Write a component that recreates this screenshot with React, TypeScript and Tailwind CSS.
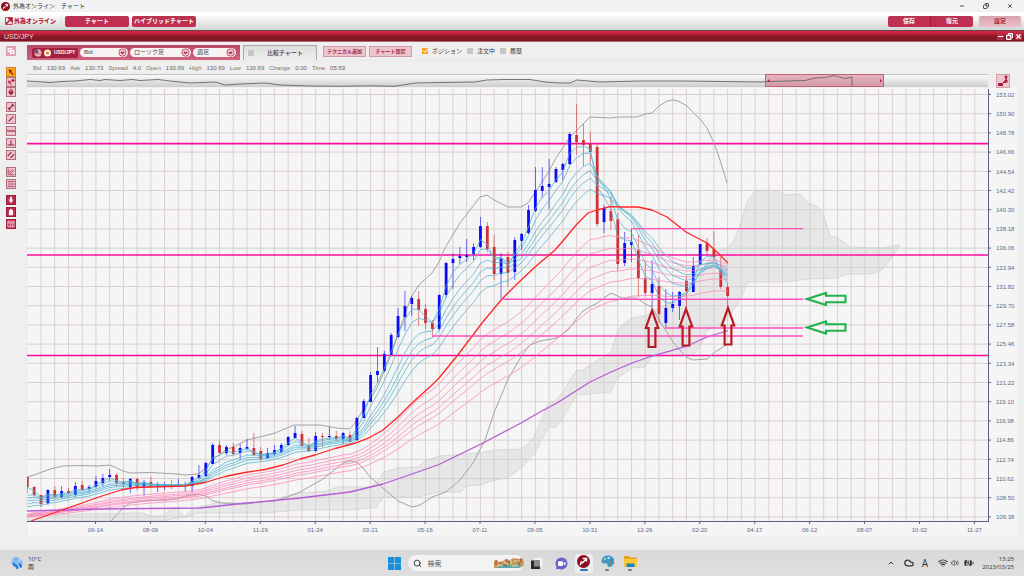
import type { ReactNode } from "react";
import { ChevronUp, Cloud, Wifi, Volume2, BatteryCharging, Search, Minus, Copy, X } from "lucide-react";

type Candle = [up: 0 | 1, high: number, top: number, bottom: number, low: number];

const candles: Candle[] = [
  [0, 477, 477, 487, 493], [0, 486, 487, 495, 497], [0, 495, 495, 504, 507], [1, 489, 490, 503, 505],
  [0, 486, 490, 497, 499], [1, 486, 491, 497, 499], [0, 488, 491, 493, 495], [1, 482, 486, 495, 497],
  [0, 481, 485, 490, 490], [1, 485, 487, 489, 492], [1, 476, 481, 487, 488], [1, 474, 478, 483, 487],
  [1, 469, 475, 477, 481], [0, 473, 475, 483, 487], [0, 478, 482, 484, 488], [1, 478, 479, 487, 493],
  [0, 478, 479, 487, 490], [1, 480, 482, 487, 496], [0, 477, 482, 487, 488], [1, 482, 485, 487, 492],
  [1, 482, 485, 487, 490], [0, 480, 485, 486, 489], [1, 479, 485, 486, 487], [1, 482, 485, 486, 492],
  [1, 476, 477, 486, 492], [1, 465, 475, 478, 479], [1, 462, 463, 476, 477], [1, 443, 445, 464, 464],
  [0, 441, 445, 453, 453], [1, 445, 447, 453, 455], [0, 443, 447, 454, 455], [1, 444, 448, 453, 460],
  [1, 439, 447, 449, 450], [0, 433, 448, 455, 456], [0, 447, 451, 459, 461], [1, 448, 453, 458, 459],
  [1, 445, 450, 454, 456], [1, 443, 445, 452, 453], [1, 436, 437, 445, 446], [1, 426, 433, 438, 439],
  [0, 431, 434, 446, 447], [0, 438, 445, 451, 451], [1, 432, 436, 451, 452], [0, 433, 436, 437, 447],
  [1, 427, 436, 437, 440], [0, 431, 436, 439, 441], [1, 432, 433, 439, 444], [0, 431, 435, 442, 442],
  [1, 417, 418, 440, 441], [1, 399, 401, 418, 418], [1, 372, 375, 402, 402], [1, 347, 371, 375, 382],
  [1, 351, 354, 371, 372], [1, 333, 335, 355, 355], [1, 308, 316, 337, 338], [1, 291, 306, 317, 331],
  [1, 296, 298, 304, 316], [0, 291, 299, 310, 326], [0, 304, 309, 323, 329], [0, 320, 323, 329, 337],
  [1, 294, 295, 329, 331], [1, 262, 263, 295, 298], [1, 253, 259, 263, 289], [1, 247, 256, 258, 264],
  [1, 239, 255, 257, 262], [1, 243, 247, 254, 260], [1, 217, 226, 247, 248], [0, 222, 226, 249, 252],
  [0, 235, 247, 274, 280], [1, 253, 258, 274, 299], [0, 252, 257, 273, 287], [1, 237, 240, 272, 280],
  [1, 233, 234, 241, 250], [1, 205, 210, 233, 234], [1, 167, 190, 211, 212], [1, 167, 186, 191, 198],
  [1, 159, 184, 187, 209], [1, 167, 169, 182, 183], [1, 163, 164, 170, 180], [1, 132, 134, 164, 165],
  [0, 104, 135, 142, 155], [0, 124, 140, 145, 166], [0, 132, 144, 152, 162], [0, 144, 147, 224, 227],
  [1, 205, 208, 222, 233], [0, 196, 211, 221, 230], [0, 213, 219, 264, 271], [1, 232, 243, 263, 266],
  [1, 228, 242, 245, 262], [0, 235, 250, 278, 297], [0, 262, 278, 293, 296], [1, 260, 284, 293, 307],
  [0, 277, 286, 314, 323], [1, 289, 308, 323, 328], [1, 292, 304, 308, 312], [1, 291, 292, 306, 320],
  [0, 277, 281, 291, 310], [1, 257, 266, 292, 292], [1, 244, 244, 265, 265], [0, 238, 243, 251, 255],
  [0, 231, 249, 257, 260], [0, 257, 270, 287, 289], [0, 283, 287, 296, 307],
];

const STEP = 6.866;
const candleX = (i: number) => 27.3 + i * STEP;

function ema(period: number, seed: number) {
  const k = 2 / (period + 1);
  let value = seed;
  return candles
    .map(([up, , top, bottom], i) => {
      const close = up ? top : bottom;
      value = i === 0 ? seed : value + k * (close - value);
      return `${candleX(i).toFixed(1)},${value.toFixed(1)}`;
    })
    .join(" ");
}

const shortAverages = [[3, 487], [5, 495], [8, 498], [10, 501], [12, 504], [15, 507]].map(([p, s]) => ema(p, s));
const longAverages = [[30, 514], [35, 515], [40, 515], [45, 516], [50, 516], [60, 517]].map(([p, s]) => ema(p, s));

const middle =
  "31,521 48,515 62,510 82,503 102,496 121,490 135,487.5 150,487 185,486 205,482.5 225,476.5 245,472.5 265,469.5 283,465 300,459 315,455 335,448.5 350,444.5 357,442.7 370,437.3 383,430 398,417 412,403 432,385 439,378 457,356 473,335 482,323 502,299 517,284 535,267 555,250 562,242 577,224 588,213 597,210 610,206.7 620,207 638,207 652,210 667,217 686,232 707,243 718,253 728,263";
const slow =
  "27,511 100,509 200,508 247,503 300,498 350,492 383,484 412,474 439,464.5 485,442 521,423 540,412 557,403 590,382 611,372 632,363 652,356 687,346 707,337 728,330.5";
const upperBand =
  "27,477 37,474 50,469 63,466 80,465.5 97,466 110,465 123,471 130,473 150,472.5 177,474 185,475 198,474 205,469 213,459 226,450 235,446 247,440 260,437 275,433 287,428 294,425 320,425 337,428 350,429 357,420 363,410 377,388 391,355 397,337 404,317 411,297 419,285 432,273 439,262 445,248 460,223 480,197 487,195 494,200 502,204 508,207 521,207 528,203 542,182 549,171 556,158 570,137 583,124 590,117 610,118 620,117 637,117 645,114 652,113 659,106 667,101 673,100 678,101 687,106 700,119 707,128 714,143 720,160 727,183";
const lowerBand =
  "111,521 123,508 130,503 143,501 167,500 177,499 185,496 198,494 206,496 213,501 223,503 247,504 260,502 275,501 287,497 300,492 323,479 343,463 350,461 357,462 363,468 370,477 383,488 398,501 412,507 420,505 432,497 446,492 460,480 473,463 485,440 494,413 508,379 522,355 530,345 540,341 557,338 568,330 577,318 583,311 597,303 611,293 622,298 637,298 645,304 652,307 659,320 673,342 686,357 693,360 707,359 715,352 728,344";
const cloud =
  "27,515 143,513 150,516 163,516 172,509 178,509 184,517 192,510 198,507 217,503 247,503 273,501 282,497 300,493 327,491 337,487 370,487 377,482 384,472 398,468 418,467 425,461 439,456 480,453 495,450 521,449 528,444 534,437 541,421 548,404 555,401 563,392 570,380 576,371 583,370 590,365 603,357 611,352 617,333 623,324 632,318 645,316 653,312 680,297 700,277 710,257 720,250 727,248 733,242 740,225 748,200 755,192 762,190 778,191 785,195 800,194 808,203 818,207 824,216 830,236 838,238 850,247 880,248 900,245 893,256 882,270 872,274 847,274 837,278 808,279 783,282 748,282 740,300 728,318 720,325 707,330 700,347 693,355 652,356 645,367 632,368 617,378 611,392 590,394 577,395 570,406 563,418 556,427 549,427 541,441 535,453 522,467 508,478 495,480 480,485 467,486 460,492 439,492 418,497 383,497 377,507 370,508 350,510 300,510 275,512 267,513 197,513 187,517 178,518 163,521 27,521";

const priceLabels = Array.from({ length: 23 }, (_, i) => (153.02 - i * 2.12).toFixed(2));
const dateLabels = ["06-14", "08-09", "10-04", "11-29", "01-24", "03-21", "05-16", "07-11", "09-05", "10-31", "12-26", "02-20", "04-17", "06-12", "08-07", "10-02", "11-27"];

const quotes = [
  ["Bid", "130.69"], ["Ask", "130.73"], ["Spread", "4.0"], ["Open", "130.69"],
  ["High", "130.69"], ["Low", "130.69"], ["Change", "0.00"], ["Time", "05:59"],
];

function PriceChart() {
  return (
    <svg viewBox="27 88 997 448" className="block w-full" role="img" aria-label="USD/JPY">
      <rect x="27" y="88" width="991" height="448" fill="#f5f5f5" />
      <g stroke="#dccfcf" strokeWidth="1">
        {Array.from({ length: 69 }, (_, i) => (
          <line key={i} x1={41 + i * 13.732} x2={41 + i * 13.732} y1="89" y2="521" />
        ))}
        {priceLabels.map((p, i) => (
          <line key={p} x1="27" x2="988" y1={94.5 + i * 19.2} y2={94.5 + i * 19.2} />
        ))}
      </g>
      <polygon points={cloud} fill="#cfcfcf" fillOpacity="0.36" stroke="#cfcfcf" strokeWidth="0.7" />
      <g stroke="#ff0a9d" strokeWidth="1.6">
        <line x1="27" x2="988" y1="143.6" y2="143.6" />
        <line x1="27" x2="988" y1="255" y2="255" />
        <line x1="27" x2="988" y1="355.5" y2="355.5" />
      </g>
      <g fill="none" strokeLinejoin="round">
        <polyline points={upperBand} stroke="#a3a3a3" strokeWidth="1" />
        <polyline points={lowerBand} stroke="#a3a3a3" strokeWidth="1" />
      </g>
      {candles.map(([up, high, top, bottom, low], i) => (
        <g key={i} fill={up ? "#0a0af5" : "#cc3338"}>
          <rect x={candleX(i) - 0.45} y={high} width="0.9" height={low - high} opacity="0.65" />
          <rect x={candleX(i) - 1.4} y={top} width="2.8" height={Math.max(bottom - top, 1)} />
        </g>
      ))}
      <g fill="none" strokeLinejoin="round">
        {longAverages.map((points) => (
          <polyline key={points} points={points} stroke="#ff86bb" strokeWidth="0.9" strokeOpacity="0.85" />
        ))}
        {shortAverages.map((points) => (
          <polyline key={points} points={points} stroke="#4fb4d2" strokeWidth="0.9" strokeOpacity="0.85" />
        ))}
        <polyline points={slow} stroke="#b45bd6" strokeWidth="1.3" />
        <polyline points={middle} stroke="#ff2424" strokeWidth="1.3" />
      </g>
      <g stroke="#ff4fbd" strokeWidth="1.4">
        <line x1="631" x2="803" y1="228.6" y2="228.6" />
        <line x1="501" x2="803" y1="299.3" y2="299.3" />
        <line x1="665" x2="803" y1="328" y2="328" />
        <line x1="432" x2="803" y1="336" y2="336" />
      </g>
      <g fill="none" stroke="#b81a22" strokeWidth="2.2">
        {[[652, 310.5], [686, 309], [728, 308]].map(([x, y]) => (
          <path key={x} d={`M${x} ${y}l6.2 17.5h-2.8v19h-6.8v-19h-2.800z`} />
        ))}
      </g>
      <g fill="none" stroke="#22b14c" strokeWidth="2.1">
        {[299, 327.5].map((y) => (
          <path key={y} d={`M807 ${y}l19 -6v2.800h19.500v6.400h-19.500v2.800z`} />
        ))}
      </g>
      <g stroke="#5a6080" strokeWidth="1">
        <line x1="27" x2="989" y1="521.5" y2="521.5" />
        <line x1="988.5" x2="988.5" y1="89" y2="522" />
        {priceLabels.map((p, i) => (
          <line key={p} x1="988" x2="991" y1={94.5 + i * 19.2} y2={94.5 + i * 19.2} />
        ))}
        {dateLabels.map((d, i) => (
          <line key={d} x1={95.5 + i * 54.93} x2={95.5 + i * 54.93} y1="521" y2="524" />
        ))}
      </g>
      <g fill="#62678a" fontSize="6">
        {priceLabels.map((p, i) => (
          <text key={p} x="996" y={96.7 + i * 19.2}>{p}</text>
        ))}
        {dateLabels.map((d, i) => (
          <text key={d} x={95.5 + i * 54.93} y="532" textAnchor="middle">{d}</text>
        ))}
      </g>
    </svg>
  );
}

function Overview() {
  return (
    <div className="min-w-0 flex-1">
      <svg viewBox="27 73 961 13" preserveAspectRatio="none" className="block h-[13px] w-full bg-linear-to-b from-white to-[#cdcdcd] shadow-[inset_0_1px_0_#c4c4c4]" aria-hidden="true">
        <rect x="765.5" y="73.5" width="118" height="12" fill="#d46a80" fillOpacity="0.5" stroke="#c4607a" />
        <polyline
          fill="none"
          stroke="#666"
          strokeWidth="0.9"
          points="27,80 50,81.5 62,80.5 75,80 90,78.5 100,79.5 105,78.5 120,79.5 132,78.5 140,79.5 158,78.5 170,80 190,82 215,81 225,84 240,83 265,82 280,84 310,85 340,85.3 370,84.8 395,85.3 415,82 440,81.5 475,81 487,79 505,78.5 530,78.5 545,81 560,82 570,82 577,79 600,81 640,80 680,80 720,80.5 760,81 770,80.5 805,79.5 815,77 825,76.5 834,74.5 845,77.5 852,76 852,86"
        />
        <path d="M769.5 78l-2 1.7 2 1.7zM880 78l2 1.7-2 1.7z" fill="#a81c3c" />
      </svg>
    </div>
  );
}

const railBase = "flex size-[10px] items-center justify-center border";
const railLight = "border-[#b06d7e] bg-[#ecc3cd] text-[#9c1c38]";
const railDark = "border-[#9c1c3c] bg-[#c02a4e] text-white";

function RailButton({ label, tone = railLight, children }: { label: string; tone?: string; children: ReactNode }) {
  return (
    <button type="button" aria-label={label} className={`${railBase} ${tone}`}>
      <svg viewBox="0 0 10 10" className="size-2" fill="none" stroke="currentColor" strokeWidth="1.4" aria-hidden="true">
        {children}
      </svg>
    </button>
  );
}

function ToolRail() {
  return (
    <nav aria-label="ツール" className="flex w-[27px] shrink-0 flex-col items-center border-r border-[#e9e9e9] pr-[5px] pt-1">
      <RailButton label="複製" tone="border-[#dba0ae] bg-[#e3a5b3] text-white">
        <path d="M1.5 2h4v3.5h-4zM4.5 4.5h4V8h-4z" />
      </RailButton>
      <div className="mt-[11px] flex flex-col">
        <RailButton label="選択" tone="border-[#c98a2a] bg-[#ffa317] text-[#8a1c28]">
          <path d="M2 1.5l5 2-1.7 1 3 3.5L7 9 4.300 5.300l-1 1.700z" fill="currentColor" stroke="none" />
        </RailButton>
        <RailButton label="複数選択">
          <path d="M1.5 3l4 1.5L4 5.500l2 3-1 .5-2-3-1 1.500z" fill="currentColor" stroke="none" />
          <path d="M7.5 1v4M5.5 3h4" />
        </RailButton>
        <RailButton label="移動">
          <path d="M5 1v5M3 3v2M7 3v2" />
          <path d="M1.5 5h7L5 9.5z" fill="currentColor" stroke="none" />
        </RailButton>
      </div>
      <div className="mt-[5px] flex flex-col gap-0.5">
        <RailButton label="線分">
          <path d="M2 8l6-6M1 6.5h2.5V9M6.5 1v2.5H9" />
        </RailButton>
        <RailButton label="直線"><path d="M2 8l6-6" /></RailButton>
        <RailButton label="水平線"><path d="M0 5h10" /></RailButton>
        <RailButton label="垂直線"><path d="M5 1.5v6M1 7.5h8" /></RailButton>
        <RailButton label="平行線"><path d="M1 6l4.500-4.500M4.500 8.500L9 4" /></RailButton>
      </div>
      <div className="mt-[7px] flex flex-col gap-0.5">
        <RailButton label="フィボナッチ">
          <path d="M1.5 1v8M3 8.500l5.500-6M3 8.500h6M3 6l3-4" strokeWidth="0.9" />
        </RailButton>
        <RailButton label="リトレースメント"><path d="M1 2h8M1 5h8M1 8h8" strokeWidth="0.9" /></RailButton>
      </div>
      <div className="mt-[6px] flex flex-col gap-0.5">
        <RailButton label="下げる" tone={railDark}>
          <path d="M3.800 1h2.400v3.500h2L5 9 1.800 4.500h2z" fill="currentColor" stroke="none" />
        </RailButton>
        <RailButton label="削除" tone={railDark}>
          <path d="M5 1l2.500 2v3l1 1h-1v2h-5V7h-1l1-1V3z" fill="currentColor" stroke="none" />
        </RailButton>
        <RailButton label="一覧" tone={railDark}><path d="M1 1.500h8v7H1zM1 3.500h8M4 3.500v5M6.500 3.500v5" strokeWidth="0.8" /></RailButton>
      </div>
    </nav>
  );
}

function PillSelect({ label, value, width }: { label: string; value: string; width: string }) {
  return (
    <div className={`relative ${width}`}>
      <select aria-label={label} defaultValue={value} className="block h-[9px] w-full appearance-none rounded-full bg-[#f7f3f4] pl-1 text-[6px] leading-[9px] text-[#444]">
        <option>{value}</option>
      </select>
      <svg viewBox="0 0 9 9" className="pointer-events-none absolute right-px top-0 size-[9px]" fill="none" stroke="#c25a72" aria-hidden="true">
        <circle cx="4.5" cy="4.5" r="3.7" fill="#f0c6cf" />
        <path d="M2.8 3.8l1.7 1.7 1.7-1.7" strokeWidth="1.2" stroke="#98203c" />
      </svg>
    </div>
  );
}

function Check({ label, checked = false }: { label: string; checked?: boolean }) {
  return (
    <label className="flex items-center gap-1">
      <span className="relative flex">
        <input type="checkbox" defaultChecked={checked} className="size-1.5 appearance-none bg-[#c6c6c6] checked:bg-[#ffa01e]" />
        {checked && (
          <svg viewBox="0 0 6 6" className="pointer-events-none absolute inset-0 size-1.5" fill="none" stroke="#fff" aria-hidden="true">
            <path d="M1 2.5l2 2L5.500 1" />
          </svg>
        )}
      </span>
      {label}
    </label>
  );
}

const softButton = "mt-px h-[11px] w-[43px] whitespace-nowrap border border-[#cf9ba6] bg-[#eec5cd] text-[5px] font-bold text-[#a01c3a]";

function ChartToolbar() {
  return (
    <div className="flex h-[18px] items-start pt-[3px] text-[6px] leading-none text-[#444]">
      <div className="flex h-[15px] w-[213px] items-center gap-0.5 bg-linear-to-b from-[#b84563] to-[#cf6480] pl-[5px] pr-[3px]">
        <button type="button" className="flex h-[10px] w-[46px] items-center gap-0.5 rounded-xs bg-[#a3203f] pl-0.5 text-[5px] font-bold text-white">
          <svg viewBox="0 0 18 8" className="h-2 w-[18px] shrink-0" aria-hidden="true">
            <circle cx="4" cy="4" r="3.500" fill="#f5e9e9" />
            <path d="M1 2.700h6.200M.6 4.300h6.800M1 5.900h6" stroke="#cf4450" strokeWidth=".8" />
            <path d="M.5 4A3.500 3.500 0 0 1 4 .5V4z" fill="#5b5388" />
            <circle cx="13.500" cy="4" r="3.500" fill="#fff2e4" />
            <circle cx="13.500" cy="4" r="1.500" fill="#ef7a28" />
          </svg>
          USD/JPY
        </button>
        <PillSelect label="レート種別" value="Bid" width="w-12" />
        <PillSelect label="チャート種別" value="ローソク足" width="w-[61px]" />
        <PillSelect label="足種" value="週足" width="w-[43px]" />
      </div>
      <button type="button" className="ml-[3px] flex h-[15px] w-[74px] items-center gap-[13px] border border-b-0 border-[#aaa] bg-linear-to-b from-[#dcdcdc] to-[#f0f0f0] pl-1 font-medium">
        <span className="size-1.5 bg-[#c6c6c6]" />
        比較チャート
      </button>
      <button type="button" className={`${softButton} ml-1.5`}>テクニカル追加</button>
      <button type="button" className={`${softButton} ml-[3px]`}>チャート設定</button>
      <div className="ml-2.5 mt-[3px] flex items-center gap-[5px] whitespace-nowrap">
        <Check label="ポジション" checked />
        <Check label="注文中" />
        <Check label="履歴" />
      </div>
    </div>
  );
}

function Mark({ className }: { className: string }) {
  return (
    <svg viewBox="0 0 12 12" className={className} aria-hidden="true">
      <circle cx="6" cy="6" r="6" fill="#8c0f20" />
      <path d="M3 9.300l1-2.800 1.300.6L8.500 3.500M5.300 3.200h3.500v3" fill="none" stroke="#fff" strokeWidth="1.300" />
    </svg>
  );
}

const redButton = "h-[11px] rounded-xs bg-linear-to-b from-[#b93353] to-[#c52a50] text-[6px] font-bold leading-none text-white";

function AppHeader() {
  return (
    <header>
      <div className="flex h-3 items-center bg-[#f2f2f2] pl-px pr-[11px] text-[6px] leading-none text-[#333]">
        <Mark className="size-[9px]" />
        <h1 className="ml-[3px] whitespace-pre">外為オンライン　チャート</h1>
        <div className="ml-auto flex gap-[18px] text-[#222]">
          <button type="button" aria-label="最小化"><Minus className="size-1.5" strokeWidth={3} /></button>
          <button type="button" aria-label="元に戻す"><Copy className="size-1.5 -scale-x-100" strokeWidth={3} /></button>
          <button type="button" aria-label="閉じる"><X className="size-1.5" strokeWidth={3} /></button>
        </div>
      </div>
      <div className="flex h-[18px] items-center bg-linear-to-b from-white from-10% to-[#d4d4d4] pl-[5px] pr-[3px]">
        <div className="flex w-[57px] items-center gap-px whitespace-nowrap border-r border-[#ddd] text-[6px] font-black leading-none text-[#b8183c]">
          <svg viewBox="0 0 8 8" className="size-2" aria-hidden="true">
            <path d="M.5.5h7v7h-7z" fill="none" stroke="#c54a64" />
            <path d="M1 7l5-5M3 1.500h3.500V5" stroke="#b8183c" strokeWidth="1.600" fill="none" />
          </svg>
          外為オンライン
        </div>
        <button type="button" className={`${redButton} ml-[3px] w-16`}>チャート</button>
        <button type="button" className={`${redButton} ml-[3px] w-16 whitespace-nowrap`}>ハイブリッドチャート</button>
        <div className="ml-auto flex">
          <button type="button" className={`${redButton} w-[43px] rounded-r-none border-r border-[#9e1c3c]`}>保存</button>
          <button type="button" className={`${redButton} w-[42px] rounded-l-none`}>復元</button>
          <button type="button" className="ml-[6px] h-[11px] w-[42px] rounded-xs bg-linear-to-b from-[#d9a5ae] to-[#e8c0c7] text-[6px] font-bold leading-none text-[#a32440]">設定</button>
        </div>
      </div>
      <div className="flex h-3 items-center border-y border-t-[#5f4a4f] border-b-[#b06a74] bg-linear-to-b from-[#ce2341] from-20% via-[#8e1b2b] via-50% to-[#7d1624] pl-1 pr-[2px] text-[7px] leading-none text-[#ecd9dc]">
        <h2>USD/JPY</h2>
        <div className="ml-auto flex gap-0.5 text-white">
          <button type="button" aria-label="最小化" className="bg-[#b52a48]"><Minus className="size-[7px]" strokeWidth={4} /></button>
          <button type="button" aria-label="元に戻す" className="bg-[#b52a48]"><Copy className="size-[7px] -scale-x-100" strokeWidth={4} /></button>
          <button type="button" aria-label="閉じる" className="bg-[#b52a48]"><X className="size-[7px]" strokeWidth={4} /></button>
        </div>
      </div>
    </header>
  );
}

function Taskbar() {
  return (
    <footer className="mt-auto grid h-[26px] grid-cols-[1fr_auto_1fr] items-center bg-linear-to-b from-[#d8d8d8] to-[#dfdfdf] font-['Open_Sans','Noto_Sans_CJK_JP',sans-serif] text-[6px] leading-[8px] text-[#333]">
      <div className="flex items-center gap-1 pl-[10px]">
        <svg viewBox="0 0 14 14" className="size-[14px]" aria-hidden="true">
          <circle cx="6" cy="4.5" r="3.5" fill="#7fb2ee" />
          <circle cx="10" cy="6" r="3" fill="#a9cdf5" />
          <rect x="1" y="4.5" width="12" height="4.5" rx="2.2" fill="#8fbdf2" />
          <path d="M4 8l.7 1.500M6.500 10l.8 1.800M10 8.500l.8 2" stroke="#1f78e8" strokeWidth="2.600" strokeLinecap="round" />
        </svg>
        <div>
          <div>10°C</div>
          <div>雨</div>
        </div>
      </div>
      <div className="flex items-center">
        <button type="button" aria-label="スタート">
          <svg viewBox="0 0 13 13" className="size-[13px]" aria-hidden="true">
            <path d="M0 0h6.200v6.200H0zM6.800 0H13v6.200H6.800zM0 6.800h6.200V13H0zM6.800 6.800H13V13H6.800z" fill="#1590dc" />
          </svg>
        </button>
        <label className="ml-[7px] flex h-4 w-[116px] items-center gap-1.5 overflow-hidden rounded-full bg-[#f3f3f3] pl-[5px]">
          <Search className="size-[9px] shrink-0" strokeWidth={2.5} />
          <input type="search" aria-label="検索" placeholder="検索" className="w-[60px] bg-transparent text-[7px] leading-none outline-none placeholder:text-[#555]" />
          <svg viewBox="0 0 30 12" className="ml-auto h-3 w-[30px] shrink-0" aria-hidden="true">
            <path d="M0 11V4l3-1 2 2 4-1 3-2 4 1 3-2 5 1 4-1 2 2v6l-5 2z" fill="#c79a5a" />
            <path d="M4 8h24l-3 3H3z" fill="#5fa7a8" />
            <path d="M2 3v5M6 5l2 3M12 2l1 4M22 2l2 4M27 1v5" stroke="#b5423d" />
            <path d="M10 5l4 2M17 3v4M20 4h5M3 9l6-1M18 9h6" stroke="#e9d9a0" />
            <path d="M9 8l4 1M15 4v3M25 5v3" stroke="#3d6a58" />
          </svg>
        </label>
        <button type="button" aria-label="タスク ビュー" className="ml-1.5">
          <svg viewBox="0 0 13 13" className="size-[13px]" aria-hidden="true">
            <path d="M4 1h8.500v8.500H4z" fill="#f4f4f4" />
            <path d="M1 3.500h9V12H1z" fill="#2a2a2a" />
            <path d="M4 3.500h6v6H4z" fill="#8c8c8c" />
          </svg>
        </button>
        <button type="button" aria-label="チャット" className="ml-3">
          <svg viewBox="0 0 13 13" className="size-[13px]" aria-hidden="true">
            <circle cx="6.5" cy="6.5" r="6" fill="#6761c8" />
            <path d="M1 12l1-4 3 4z" fill="#6761c8" />
            <rect x="3" y="4.2" width="5" height="4.8" rx="1" fill="#fff" />
            <path d="M8.5 6l2-1.300v3.800l-2-1.300z" fill="#fff" />
          </svg>
        </button>
        <button type="button" aria-label="外為オンライン" className="ml-[7px] flex h-[19px] w-[18px] flex-col items-center justify-center gap-px rounded-xs bg-[#eee]">
          <Mark className="size-[13px]" />
          <span className="h-0.5 w-2 rounded-full bg-[#2a78c8]" />
        </button>
        <button type="button" aria-label="ペイント" className="ml-2 flex flex-col items-center gap-px">
          <svg viewBox="0 0 13 13" className="size-[13px]" aria-hidden="true">
            <path d="M6 .5a6 5.500 0 1 1 2 11.500q-2 0-1.500-2t-2-1.500Q.5 9 .5 6 1 1 6 .5z" fill="#2c9ed8" />
            <circle cx="4" cy="4" r="1.1" fill="#f4d24c" />
            <circle cx="7.5" cy="3" r="1.1" fill="#f2f2f2" />
            <circle cx="3" cy="6.8" r="1" fill="#e8664a" />
            <path d="M10 3l1.200 5L10 12.500 9 8z" fill="#b87534" />
          </svg>
          <span className="h-0.5 w-1 rounded-full bg-[#777]" />
        </button>
        <button type="button" aria-label="エクスプローラー" className="ml-2.5 flex flex-col items-center gap-px">
          <svg viewBox="0 0 13 13" className="size-[13px]" aria-hidden="true">
            <path d="M0 1h5l1.500 1.500H13V5H0z" fill="#e5a21c" />
            <path d="M0 4h13v8H0z" fill="#fdc936" />
            <path d="M2.500 8.500h8V12h-8z" fill="#1c7fc4" />
          </svg>
          <span className="h-0.5 w-1 rounded-full bg-[#777]" />
        </button>
      </div>
      <div className="flex items-center justify-end pr-[10px]">
        <ChevronUp className="size-2" strokeWidth={3} />
        <Cloud className="ml-[9px] size-2.5" strokeWidth={3} />
        <span className="ml-2 text-[10px] leading-none">A</span>
        <Wifi className="ml-2.5 size-2.5" strokeWidth={2.5} />
        <Volume2 className="ml-[3px] size-2" />
        <BatteryCharging className="ml-[5px] size-2.5" fill="#333" />
        <div className="ml-2 text-right">
          <div>13:25</div>
          <div>2023/03/25</div>
        </div>
      </div>
    </footer>
  );
}

export default function App() {
  return (
    <div className="flex min-h-screen flex-col bg-[#efefef] font-['Liberation_Sans','Noto_Sans_CJK_JP',sans-serif]">
      <AppHeader />
      <main className="flex">
        <ToolRail />
        <div className="min-w-0 flex-1">
          <ChartToolbar />
          <div className="flex h-[14px] items-center gap-[5px] border-t border-[#e8e8e8] pl-1.5 text-[6px] leading-none text-[#666]">
            {quotes.map(([name, value]) => (
              <span key={name} className="flex gap-[5px]">
                <span className="text-[#857463]">{name}</span>
                <span>{value}</span>
              </span>
            ))}
          </div>
          <div className="flex pr-[14px]">
            <Overview />
            <button type="button" aria-label="縮尺" className="ml-2 flex size-[14px] items-center justify-center border border-[#d5a0ac] bg-[#ecc8d0]">
              <svg viewBox="0 0 12 12" className="size-3" aria-hidden="true">
                <path d="M1 8h5v3H1zM6 6.500h3V8H6zM7.500 5h3v2.500h-3zM9 0l2 2.500H7zM8.300 2h1.600v4H8.300z" fill="#b01c3c" />
              </svg>
            </button>
          </div>
          <PriceChart />
        </div>
      </main>
      <Taskbar />
    </div>
  );
}
